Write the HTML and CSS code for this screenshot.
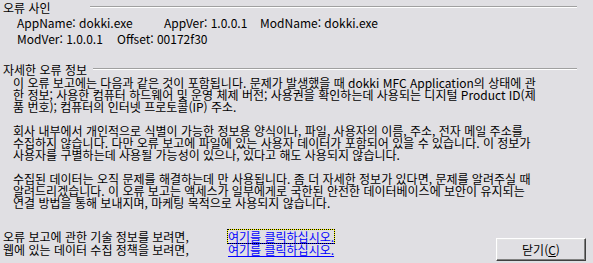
FILE: index.html
```html
<!DOCTYPE html>
<html lang="ko">
<head>
    <meta charset="UTF-8">
    <meta name="viewport" content="width=device-width, initial-scale=1.0">
    <title>오류 보고</title>
    <link rel="stylesheet" href="styles.css">
</head>
<body>
    <div class="dialog">
        <!-- 오류 사인 -->
        <div class="group-title first">
            <span class="group-label">오류 사인</span>
            <div class="etched"></div>
        </div>
        <div class="signature">
            <div class="sig-row">
                <span class="col-app">AppName: dokki.exe</span>
                <span class="col-ver">AppVer: 1.0.0.1</span>
                <span>ModName: dokki.exe</span>
            </div>
            <div class="sig-row">
                <span class="col-mod">ModVer: 1.0.0.1</span>
                <span>Offset: 00172f30</span>
            </div>
        </div>

        <!-- 자세한 오류 정보 -->
        <div class="group-title second">
            <span class="group-label">자세한 오류 정보</span>
            <div class="etched"></div>
        </div>
        <div class="details">
            <p>이 오류 보고에는 다음과 같은 것이 포함됩니다. 문제가 발생했을 때 dokki MFC Application의 상태에 관<br>
            한 정보; 사용한 컴퓨터 하드웨어 및 운영 체제 버전; 사용권을 확인하는데 사용되는 디지털 Product ID(제<br>
            품 번호); 컴퓨터의 인터넷 프로토콜(IP) 주소.</p>
            <p>회사 내부에서 개인적으로 식별이 가능한 정보용 양식이나, 파일, 사용자의 이름, 주소, 전자 메일 주소를<br>
            수집하지 않습니다. 다만 오류 보고에 파일에 있는 사용자 데이터가 포함되어 있을 수 있습니다. 이 정보가<br>
            사용자를 구별하는데 사용될 가능성이 있으나, 있다고 해도 사용되지 않습니다.</p>
            <p>수집된 데이터는 오직 문제를 해결하는데 만 사용됩니다. 좀 더 자세한 정보가 있다면, 문제를 알려주실 때<br>
            알려드리겠습니다. 이 오류 보고는 액세스가 일부에게로 국한된 안전한 데이터베이스에 보안이 유지되는<br>
            연결 방법을 통해 보내지며, 마케팅 목적으로 사용되지 않습니다.</p>
        </div>

        <!-- 링크와 닫기 버튼 -->
        <div class="footer">
            <div class="links">
                <div class="link-row">
                    <span class="link-label">오류 보고에 관한 기술 정보를 보려면,</span>
                    <a href="#" class="link focused">여기를 클릭하십시오.</a>
                </div>
                <div class="link-row">
                    <span class="link-label">웹에 있는 데이터 수집 정책을 보려면,</span>
                    <a href="#" class="link">여기를 클릭하십시오.</a>
                </div>
            </div>
            <button class="close-btn">닫기(<u>C</u>)</button>
        </div>
    </div>
</body>
</html>
```

FILE: styles.css
```css
body {
    margin: 0;
    background-color: #e0dfe3;
    color: #000;
    font-family: "Noto Sans CJK KR", "Noto Sans", sans-serif;
    font-size: 12px;
}

.dialog {
    width: 593px;
    height: 263px;
    padding-top: 2px;
    box-sizing: border-box;
}

.group-title {
    display: flex;
    align-items: center;
    gap: 6px;
    height: 12px;
    line-height: 12px;
    padding: 0 16px 0 3px;
    white-space: nowrap;
}

.group-title.first .group-label {
    width: 81px;
}

.group-title.second {
    margin-top: 17px;
}

.etched {
    flex-grow: 1;
    height: 0;
    border-top: 1px solid #a0a0a0;
    border-bottom: 1px solid #ffffff;
    margin-top: -2px;
}

.signature {
    padding-left: 17px;
    margin-top: 1px;
}

.sig-row {
    display: flex;
    height: 16px;
    line-height: 16px;
    white-space: nowrap;
}

.col-app {
    width: 147px;
}

.col-ver {
    width: 96px;
}

.col-mod {
    width: 100px;
}

.details {
    padding-left: 13px;
    margin-top: 1px;
    white-space: nowrap;
}

.details p {
    margin: 0 0 12px;
    line-height: 12px;
}

.details p:last-child {
    margin-bottom: 0;
}

.footer {
    display: flex;
    justify-content: space-between;
    margin-top: 21px;
    padding: 0 7px 0 3px;
}

.link-row {
    display: flex;
    height: 13px;
    line-height: 13px;
    white-space: nowrap;
}

.link-label {
    width: 225px;
}

.link {
    color: #0000ff;
    text-decoration: underline;
}

.link.focused {
    outline: 1px dotted #000;
    box-shadow: 0 0 0 1px #ffff00;
}

.close-btn {
    width: 90px;
    height: 23px;
    margin-top: 8px;
    padding: 0;
    background-color: #e0dfe3;
    font-family: inherit;
    font-size: 12px;
    color: #000;
    border: 1px solid;
    border-color: #ffffff #404040 #404040 #ffffff;
    box-shadow: inset -1px -1px 0 #808080, inset 1px 1px 0 #e3e3e3;
}
```
